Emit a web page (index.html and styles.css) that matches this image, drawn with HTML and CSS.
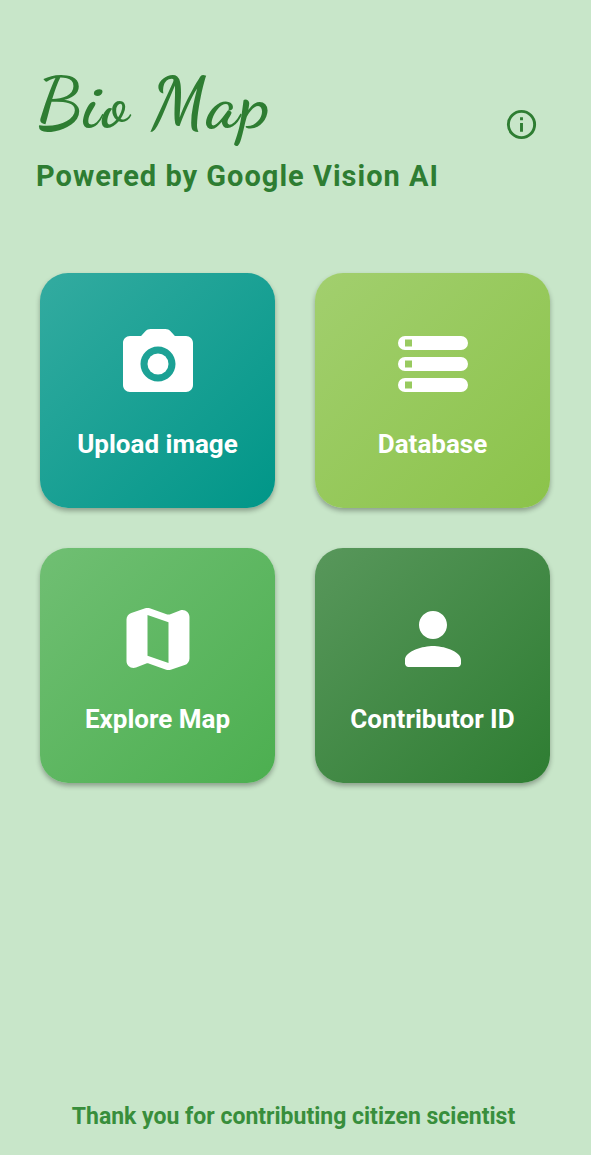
FILE: index.html
```html
<!DOCTYPE html>
<html lang="en">
<head>
  <meta charset="UTF-8">
  <meta name="viewport" content="width=device-width, initial-scale=1">
  <title>Bio Map</title>
  <link rel="stylesheet" href="styles.css">
</head>
<body>
  <header class="header">
    <div class="brand">
      <h1 class="title">Bio Map</h1>
      <p class="subtitle">Powered by Google Vision AI</p>
    </div>
    <button class="info-button" type="button" aria-label="About">
      <svg viewBox="0 0 24 24" aria-hidden="true">
        <path fill-rule="evenodd" d="M12 2a10 10 0 1 0 0 20a10 10 0 1 0 0-20zM12 4a8 8 0 1 1 0 16a8 8 0 1 1 0-16zM11 7h2v2h-2zM11 11h2v6h-2z"/>
      </svg>
    </button>
  </header>

  <main class="menu">
    <button class="card upload" type="button">
      <svg viewBox="0 0 24 24" aria-hidden="true">
        <circle cx="12" cy="12" r="3"/>
        <path fill-rule="evenodd" d="M9 2L7.170 4H4c-1.100 0-2 .9-2 2v12c0 1.100.9 2 2 2h16c1.100 0 2-.9 2-2V6c0-1.100-.9-2-2-2h-3.170L15.590 2.650C15.220 2.240 14.680 2 14.120 2H9.880c-.56 0-1.100.24-1.480.65L7.170 4zM12 17c-2.760 0-5-2.240-5-5s2.240-5 5-5s5 2.240 5 5s-2.240 5-5 5z"/>
      </svg>
      <span>Upload image</span>
    </button>
    <button class="card database" type="button">
      <svg viewBox="0 0 24 24" aria-hidden="true">
        <path fill-rule="evenodd" d="M4 20h16a2 2 0 0 0 0-4H4a2 2 0 0 0 0 4zM4 17h2v2H4zM4 8h16a2 2 0 0 0 0-4H4a2 2 0 0 0 0 4zM4 5h2v2H4zM4 14h16a2 2 0 0 0 0-4H4a2 2 0 0 0 0 4zM4 11h2v2H4z"/>
      </svg>
      <span>Database</span>
    </button>
    <button class="card explore" type="button">
      <svg viewBox="0 0 24 24" aria-hidden="true">
        <path d="M14.650 4.980l-5-1.750c-.42-.15-.88-.15-1.300-.01L4.360 4.560C3.550 4.840 3 5.600 3 6.460v11.850c0 1.410 1.410 2.370 2.720 1.860l2.930-1.140c.22-.09.47-.09.69-.01l5 1.750c.42.15.88.15 1.300.01l3.990-1.340c.81-.27 1.360-1.040 1.360-1.900V5.690c0-1.410-1.410-2.370-2.720-1.860l-2.930 1.140c-.22.08-.46.09-.69.01zM15 18.890l-6-2.110V5.110l6 2.110v11.670z"/>
      </svg>
      <span>Explore Map</span>
    </button>
    <button class="card contributor" type="button">
      <svg viewBox="0 0 24 24" aria-hidden="true">
        <path d="M12 12c2.210 0 4-1.790 4-4s-1.790-4-4-4s-4 1.790-4 4s1.790 4 4 4zM12 14c-2.670 0-8 1.340-8 4v1c0 .55.45 1 1 1h14c.55 0 1-.45 1-1v-1c0-2.660-5.330-4-8-4z"/>
      </svg>
      <span>Contributor ID</span>
    </button>
  </main>

  <footer class="footer">Thank you for contributing citizen scientist</footer>
</body>
</html>
```

FILE: styles.css
```css
* {
  box-sizing: border-box;
}

body {
  font-family: Roboto, sans-serif;
  background-color: #c8e6c9;
  color: #2e7d32;
  margin: 0;
  min-height: 100vh;
  display: flex;
  flex-direction: column;
}

.header {
  display: flex;
  justify-content: space-between;
  align-items: center;
  padding: 52px 40px 0 36px;
}

.title {
  font-family: "Dancing Script", cursive;
  font-size: 70px;
  font-weight: 700;
  line-height: 104px;
  letter-spacing: 2px;
  margin: 0;
}

.subtitle {
  font-size: 29px;
  font-weight: 700;
  line-height: 40px;
  letter-spacing: 1px;
  margin: 0;
}

.info-button {
  display: flex;
  padding: 12px;
  border: none;
  background: none;
  color: inherit;
  cursor: pointer;
}

.info-button svg {
  width: 35px;
  height: 35px;
  fill: currentColor;
}

.menu {
  display: grid;
  grid-template-columns: 1fr 1fr;
  gap: 40px;
  padding: 77px 41px 40px 40px;
}

.card {
  display: flex;
  flex-direction: column;
  justify-content: center;
  align-items: center;
  gap: 24px;
  aspect-ratio: 1;
  padding: 0 0 2px;
  border: none;
  border-radius: 28px;
  box-shadow: 0 3px 5px rgba(0, 0, 0, 0.3);
  color: #ffffff;
  font-family: inherit;
  font-size: 26px;
  font-weight: 700;
  line-height: 28px;
  cursor: pointer;
}

.card svg {
  width: 84px;
  height: 84px;
  fill: currentColor;
}

.upload {
  background: linear-gradient(135deg, #33aba0, #009688);
}

.database {
  background: linear-gradient(135deg, #a2cf6e, #8bc34a);
}

.explore {
  background: linear-gradient(135deg, #70bf73, #4caf50);
}

.contributor {
  background: linear-gradient(135deg, #58975b, #2e7d32);
}

.footer {
  margin-top: auto;
  padding: 0 24px 23px 20px;
  color: #388e3c;
  font-size: 23px;
  font-weight: 700;
  line-height: 30px;
  text-align: center;
}
```
